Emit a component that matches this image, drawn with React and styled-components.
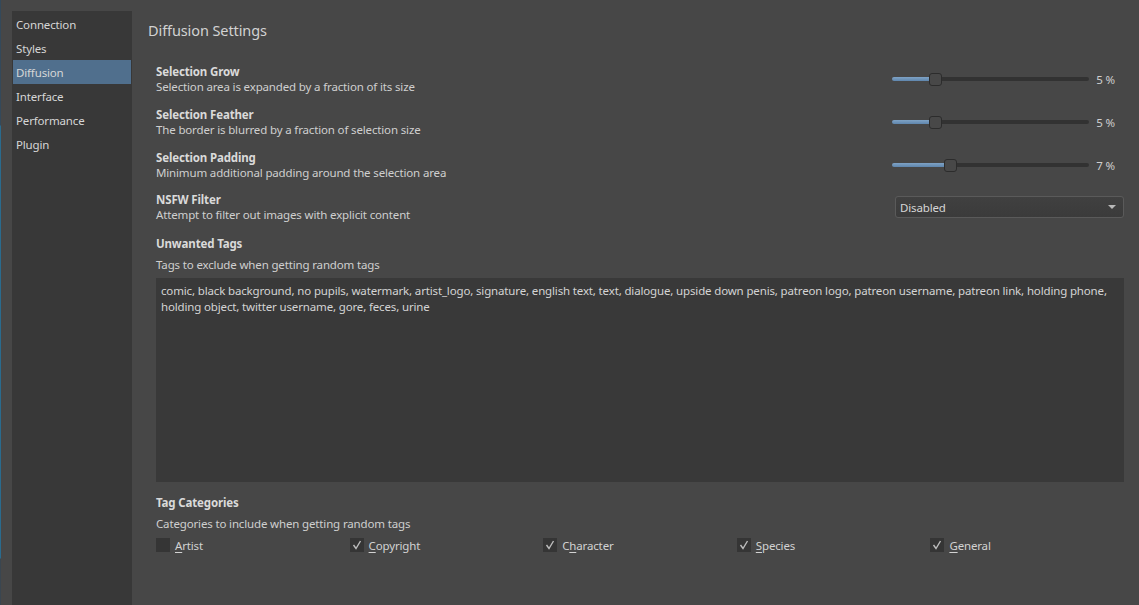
import React from "react";
import styled, { createGlobalStyle } from "styled-components";

const Global = createGlobalStyle`
  html, body { margin: 0; padding: 0; background: #474747; }
  body { font-family: "Noto Sans", "Liberation Sans", sans-serif; font-size: 11.5px; letter-spacing: -0.15px; color: #d4d4d4; }
  * { box-sizing: border-box; }
`;

const Root = styled.div`
  display: flex;
  width: 1139px;
  height: 605px;
  background: #474747;
  overflow: hidden;
`;

const EdgeStrip = styled.div`
  width: 1px;
  flex: none;
  background: linear-gradient(
    to bottom,
    #34495a 0px,
    #34495a 125px,
    #2a6b8e 126px,
    #2a6b8e 558px,
    #3a4650 559px
  );
`;

const Sidebar = styled.nav`
  flex: none;
  width: 120px;
  margin: 11px 0 0 11px;
  padding: 1px;
  background: #383838;
  display: flex;
  flex-direction: column;
`;

const NavItem = styled.div`
  height: 24px;
  line-height: 24px;
  padding: 1px 0 0 3px;
  font-size: 11.5px;
  color: #d6d6d6;
  background: ${(p) => (p.$active ? "#506f8d" : "transparent")};
`;

const Main = styled.main`
  flex: 1;
  display: flex;
  flex-direction: column;
  padding: 20px 15px 0 16px;
`;

const Title = styled.h1`
  margin: 0;
  font-size: 14.5px;
  font-weight: 400;
  line-height: 20px;
  letter-spacing: -0.1px;
  color: #d2d2d2;
`;

const Content = styled.div`
  display: flex;
  flex-direction: column;
  margin: 24px 0 0 8px;
`;

const Row = styled.div`
  display: flex;
  align-items: center;
  justify-content: space-between;
  height: 30px;
  margin-bottom: ${(p) => p.$gap ?? 13}px;
`;

const TextCol = styled.div`
  display: flex;
  flex-direction: column;
`;

const Label = styled.div`
  font-weight: 700;
  font-size: 11.5px;
  line-height: 15px;
  color: #dadada;
`;

const Desc = styled.div`
  font-size: 11.5px;
  line-height: 15px;
  color: #cfcfcf;
  margin-top: ${(p) => p.$top ?? 0}px;
`;

const SliderBox = styled.div`
  display: flex;
  align-items: center;
  width: 223px;
  margin-right: 9px;
`;

const Track = styled.div`
  flex: none;
  width: 197px;
  display: flex;
  align-items: center;
`;

const Fill = styled.div`
  height: 4px;
  background: linear-gradient(#7fa3c6, #5f86ad);
  border-radius: 2px 0 0 2px;
  margin-right: -4px;
`;

const Handle = styled.div`
  flex: none;
  width: 13px;
  height: 13px;
  background: #484848;
  border: 1px solid #2c2c2c;
  border-radius: 3px;
  position: relative;
  z-index: 1;
`;

const Rest = styled.div`
  flex: 1;
  height: 4px;
  background: #323232;
  border-radius: 0 2px 2px 0;
  margin-left: -4px;
`;

const Value = styled.div`
  flex: 1;
  text-align: right;
  color: #cfcfcf;
`;

const Select = styled.div`
  width: 229px;
  height: 22px;
  display: flex;
  align-items: center;
  justify-content: space-between;
  padding: 0 7px 0 4px;
  background: linear-gradient(#404040, #3b3b3b);
  border: 1px solid #5a5a5a;
  border-radius: 3px;
  color: #d6d6d6;
`;

const Arrow = styled.span`
  width: 0;
  height: 0;
  border-left: 4px solid transparent;
  border-right: 4px solid transparent;
  border-top: 4px solid #b8b8b8;
`;

const Section = styled.div`
  display: flex;
  flex-direction: column;
  margin-top: ${(p) => p.$top ?? 0}px;
`;

const TagArea = styled.textarea`
  display: block;
  width: 968px;
  height: 204px;
  margin-top: 6px;
  padding: 5px 5px;
  border: none;
  outline: none;
  resize: none;
  background: #393939;
  color: #d4d4d4;
  font-family: "Noto Sans", "Liberation Sans", sans-serif;
  font-size: 11.5px;
  letter-spacing: -0.15px;
  line-height: 16px;
`;

const CheckGrid = styled.div`
  display: grid;
  grid-template-columns: repeat(5, 1fr);
  width: 968px;
  margin-top: 7px;
`;

const CheckItem = styled.label`
  display: flex;
  align-items: center;
  gap: 5px;
  height: 14px;
  color: #d2d2d2;
`;

const Box = styled.span`
  width: 14px;
  height: 14px;
  flex: none;
  background: #353535;
  display: flex;
  align-items: center;
  justify-content: center;
`;

const Mn = styled.span`
  text-decoration: underline;
  text-underline-offset: 2px;
`;

const Check = () => (
  <svg width="10" height="10" viewBox="0 0 10 10">
    <polyline points="1.5,5 4,8.5 8.5,1" fill="none" stroke="#bdbdbd" strokeWidth="1.4" />
  </svg>
);

const Slider = ({ value, max = 25 }) => {
  const travel = 197 - 13;
  const left = Math.round((value / max) * travel);
  return (
    <SliderBox>
      <Track>
        <Fill style={{ width: left + 4 }} />
        <Handle />
        <Rest />
      </Track>
      <Value>{value} %</Value>
    </SliderBox>
  );
};

const nav = ["Connection", "Styles", "Diffusion", "Interface", "Performance", "Plugin"];

const tags =
  "comic, black background, no pupils, watermark, artist_logo, signature, english text, text, dialogue, upside down penis, patreon logo, patreon username, patreon link, holding phone, holding object, twitter username, gore, feces, urine";

const cats = [
  { pre: "", mn: "A", post: "rtist", on: false },
  { pre: "", mn: "C", post: "opyright", on: true },
  { pre: "C", mn: "h", post: "aracter", on: true },
  { pre: "", mn: "S", post: "pecies", on: true },
  { pre: "", mn: "G", post: "eneral", on: true },
];

export default function App() {
  return (
    <>
      <Global />
      <Root>
        <EdgeStrip />
        <Sidebar>
          {nav.map((n) => (
            <NavItem key={n} $active={n === "Diffusion"}>
              {n}
            </NavItem>
          ))}
        </Sidebar>
        <Main>
          <Title>Diffusion Settings</Title>
          <Content>
            <Row>
              <TextCol>
                <Label>Selection Grow</Label>
                <Desc>Selection area is expanded by a fraction of its size</Desc>
              </TextCol>
              <Slider value={5} />
            </Row>
            <Row>
              <TextCol>
                <Label>Selection Feather</Label>
                <Desc>The border is blurred by a fraction of selection size</Desc>
              </TextCol>
              <Slider value={5} />
            </Row>
            <Row $gap={12}>
              <TextCol>
                <Label>Selection Padding</Label>
                <Desc>Minimum additional padding around the selection area</Desc>
              </TextCol>
              <Slider value={7} />
            </Row>
            <Row $gap={0}>
              <TextCol>
                <Label>NSFW Filter</Label>
                <Desc>Attempt to filter out images with explicit content</Desc>
              </TextCol>
              <Select>
                <span>Disabled</span>
                <Arrow />
              </Select>
            </Row>
            <Section $top={14}>
              <Label>Unwanted Tags</Label>
              <Desc $top={6}>Tags to exclude when getting random tags</Desc>
              <TagArea readOnly defaultValue={tags} spellCheck={false} />
            </Section>
            <Section $top={13}>
              <Label>Tag Categories</Label>
              <Desc $top={6}>Categories to include when getting random tags</Desc>
              <CheckGrid>
                {cats.map((c, i) => (
                  <CheckItem key={i}>
                    <Box>{c.on && <Check />}</Box>
                    <span>
                      {c.pre}
                      <Mn>{c.mn}</Mn>
                      {c.post}
                    </span>
                  </CheckItem>
                ))}
              </CheckGrid>
            </Section>
          </Content>
        </Main>
      </Root>
    </>
  );
}
